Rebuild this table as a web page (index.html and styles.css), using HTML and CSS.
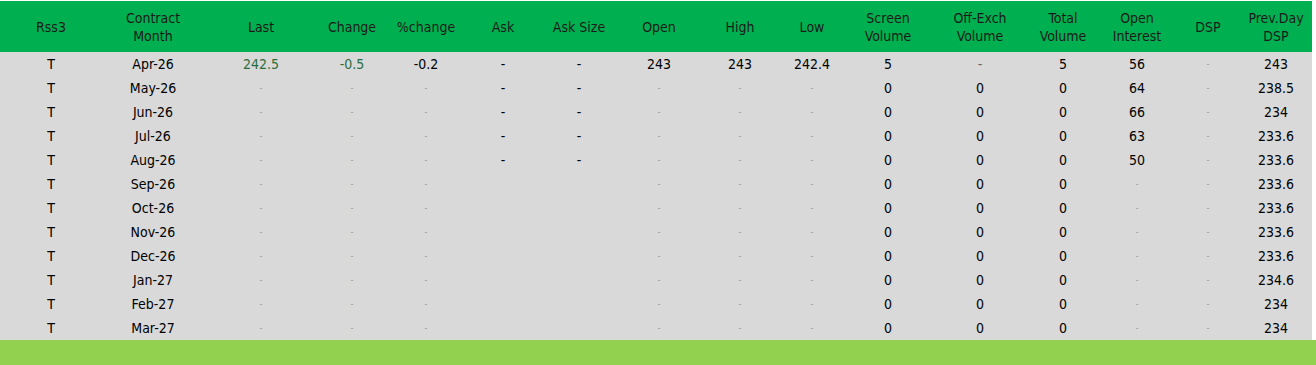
FILE: index.html
```html
<!DOCTYPE html>
<html>
<head>
<meta charset="utf-8">
<link rel="stylesheet" href="styles.css">
</head>
<body>
<div class="page">
<table class="grid">
<colgroup>
<col style="width:102px"><col style="width:102px"><col style="width:114px"><col style="width:68px">
<col style="width:80px"><col style="width:74px"><col style="width:78px"><col style="width:82px">
<col style="width:80px"><col style="width:64px"><col style="width:88px"><col style="width:96px">
<col style="width:70px"><col style="width:78px"><col style="width:64px"><col style="width:72px">
</colgroup>
<thead>
<tr>
<th>Rss3</th><th>Contract<br>Month</th><th>Last</th><th>Change</th><th>%change</th><th>Ask</th><th>Ask Size</th><th>Open</th><th>High</th><th>Low</th><th>Screen<br>Volume</th><th>Off-Exch<br>Volume</th><th>Total<br>Volume</th><th>Open<br>Interest</th><th>DSP</th><th>Prev.Day<br>DSP</th>
</tr>
</thead>
<tbody>
<tr><td>T</td><td>Apr-26</td><td class="up">242.5</td><td class="up">-0.5</td><td>-0.2</td><td>-</td><td>-</td><td>243</td><td>243</td><td>242.4</td><td>5</td><td class="na">-</td><td>5</td><td>56</td><td class="dot">-</td><td>243</td></tr>
<tr><td>T</td><td>May-26</td><td class="dot">-</td><td class="dot">-</td><td class="dot">-</td><td>-</td><td>-</td><td class="dot">-</td><td class="dot">-</td><td class="dot">-</td><td>0</td><td>0</td><td>0</td><td>64</td><td class="dot">-</td><td>238.5</td></tr>
<tr><td>T</td><td>Jun-26</td><td class="dot">-</td><td class="dot">-</td><td class="dot">-</td><td>-</td><td>-</td><td class="dot">-</td><td class="dot">-</td><td class="dot">-</td><td>0</td><td>0</td><td>0</td><td>66</td><td class="dot">-</td><td>234</td></tr>
<tr><td>T</td><td>Jul-26</td><td class="dot">-</td><td class="dot">-</td><td class="dot">-</td><td>-</td><td>-</td><td class="dot">-</td><td class="dot">-</td><td class="dot">-</td><td>0</td><td>0</td><td>0</td><td>63</td><td class="dot">-</td><td>233.6</td></tr>
<tr><td>T</td><td>Aug-26</td><td class="dot">-</td><td class="dot">-</td><td class="dot">-</td><td>-</td><td>-</td><td class="dot">-</td><td class="dot">-</td><td class="dot">-</td><td>0</td><td>0</td><td>0</td><td>50</td><td class="dot">-</td><td>233.6</td></tr>
<tr><td>T</td><td>Sep-26</td><td class="dot">-</td><td class="dot">-</td><td class="dot">-</td><td></td><td></td><td class="dot">-</td><td class="dot">-</td><td class="dot">-</td><td>0</td><td>0</td><td>0</td><td class="dot">-</td><td class="dot">-</td><td>233.6</td></tr>
<tr><td>T</td><td>Oct-26</td><td class="dot">-</td><td class="dot">-</td><td class="dot">-</td><td></td><td></td><td class="dot">-</td><td class="dot">-</td><td class="dot">-</td><td>0</td><td>0</td><td>0</td><td class="dot">-</td><td class="dot">-</td><td>233.6</td></tr>
<tr><td>T</td><td>Nov-26</td><td class="dot">-</td><td class="dot">-</td><td class="dot">-</td><td></td><td></td><td class="dot">-</td><td class="dot">-</td><td class="dot">-</td><td>0</td><td>0</td><td>0</td><td class="dot">-</td><td class="dot">-</td><td>233.6</td></tr>
<tr><td>T</td><td>Dec-26</td><td class="dot">-</td><td class="dot">-</td><td class="dot">-</td><td></td><td></td><td class="dot">-</td><td class="dot">-</td><td class="dot">-</td><td>0</td><td>0</td><td>0</td><td class="dot">-</td><td class="dot">-</td><td>233.6</td></tr>
<tr><td>T</td><td>Jan-27</td><td class="dot">-</td><td class="dot">-</td><td class="dot">-</td><td></td><td></td><td class="dot">-</td><td class="dot">-</td><td class="dot">-</td><td>0</td><td>0</td><td>0</td><td class="dot">-</td><td class="dot">-</td><td>234.6</td></tr>
<tr><td>T</td><td>Feb-27</td><td class="dot">-</td><td class="dot">-</td><td class="dot">-</td><td></td><td></td><td class="dot">-</td><td class="dot">-</td><td class="dot">-</td><td>0</td><td>0</td><td>0</td><td class="dot">-</td><td class="dot">-</td><td>234</td></tr>
<tr><td>T</td><td>Mar-27</td><td class="dot">-</td><td class="dot">-</td><td class="dot">-</td><td></td><td></td><td class="dot">-</td><td class="dot">-</td><td class="dot">-</td><td>0</td><td>0</td><td>0</td><td class="dot">-</td><td class="dot">-</td><td>234</td></tr>
</tbody>
</table>
<div class="footer-bar"></div>
</div>
</body>
</html>
```
FILE: styles.css
```css
html, body {
  margin: 0;
  padding: 0;
  background: #ffffff;
}
.page {
  padding-top: 1px;
  width: 1316px;
  height: 364px;
  overflow: hidden;
  font-family: "DejaVu Sans Condensed", "DejaVu Sans", sans-serif;
  font-size: 14px;
  color: #000;
}
.grid {
  border-collapse: collapse;
  table-layout: fixed;
  width: 1312px;
}
.grid th {
  background: #00b050;
  color: #1a1a1a;
  font-weight: normal;
  height: 51px;
  padding: 0;
  line-height: 18px;
  text-align: center;
  vertical-align: middle;
}
.grid td {
  background: #d9d9d9;
  height: 24px;
  padding: 0;
  line-height: 24px;
  text-align: center;
  white-space: nowrap;
}
.grid td.up {
  color: #2b6e3d;
}
.grid td.dot {
  color: #999999;
  font-size: 9px;
}
.grid td.na {
  color: #666;
}
.footer-bar {
  height: 25px;
  background: #92d050;
  width: 1316px;
}
```
